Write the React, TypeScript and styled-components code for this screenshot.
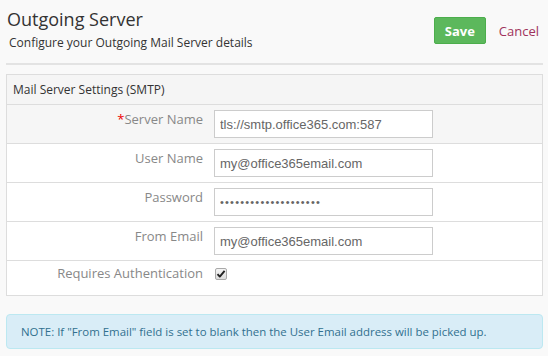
import styled, { createGlobalStyle } from "styled-components";

const GlobalStyle = createGlobalStyle`
  html, body {
    margin: 0;
    padding: 0;
    background: #f9f9f9;
  }
  body {
    font-family: "Open Sans", "Liberation Sans", sans-serif;
    color: #333;
  }
`;

const Page = styled.div`
  width: 548px;
  height: 356px;
  padding: 0 5px 0 6px;
  box-sizing: border-box;
  overflow: hidden;
`;

const Header = styled.div`
  display: flex;
  align-items: flex-start;
  justify-content: space-between;
  height: 63px;
  border-bottom: 2px solid #e3e3e3;
`;

const TitleBlock = styled.div`
  padding-top: 6px;
`;

const Title = styled.h1`
  margin: 0 0 0 1px;
  font-size: 18px;
  font-weight: 400;
  line-height: 26px;
  color: #333;
`;

const Subtitle = styled.p`
  margin: 2px 0 0 3px;
  font-size: 12px;
  line-height: 18px;
  color: #333;
`;

const Actions = styled.div`
  display: flex;
  align-items: center;
  gap: 13px;
  padding-top: 17px;
  padding-right: 6px;
`;

const SaveButton = styled.button`
  width: 52px;
  height: 27px;
  padding: 0;
  margin-right: 0;
  background: #5cb85c;
  border: 1px solid #4cae4c;
  border-radius: 2px;
  color: #fff;
  font-family: "Open Sans", sans-serif;
  font-weight: 700;
  font-size: 13px;
  cursor: pointer;
`;

const CancelLink = styled.a`
  color: #a0335c;
  font-size: 13px;
  text-decoration: none;
  margin-right: -2px;
`;

const Panel = styled.section`
  margin-top: 9px;
  border: 1px solid #ddd;
  background: #fff;
`;

const PanelHeading = styled.div`
  height: 29px;
  display: flex;
  align-items: center;
  padding-left: 6px;
  background: #f5f5f5;
  border-bottom: 1px solid #ddd;
  font-size: 12px;
  color: #333;
`;

const Row = styled.div<{ $shaded?: boolean; $last?: boolean }>`
  display: grid;
  grid-template-columns: 196px 1fr;
  column-gap: 11px;
  align-items: center;
  height: ${(p) => (p.$last ? "34px" : "38px")};
  background: ${(p) => (p.$shaded ? "#f6f6f6" : "#fff")};
  border-bottom: ${(p) => (p.$last ? "none" : "1px solid #ddd")};
`;

const Label = styled.label`
  text-align: right;
  font-size: 13px;
  color: #888;
  line-height: 18px;
  margin-top: -10px;
`;

const Required = styled.span`
  color: #e00;
`;

const TextInput = styled.input<{ $secret?: boolean }>`
  width: 219px;
  height: 28px;
  box-sizing: border-box;
  border: 1px solid #ccc;
  background: #fff;
  padding: 0 5px;
  font-family: "Liberation Sans", Arial, sans-serif;
  font-size: ${(p) => (p.$secret ? "11px" : "13px")};
  letter-spacing: ${(p) => (p.$secret ? "1.2px" : "0")};
  color: #666;
  outline: none;
`;

const CheckBox = styled.span`
  display: inline-flex;
  align-items: center;
  justify-content: center;
  width: 12px;
  height: 12px;
  box-sizing: border-box;
  margin: -8px 0 0 1px;
  border: 1px solid #a9a9a9;
  border-radius: 2px;
  background: linear-gradient(#f4f4f4, #dcdcdc);
`;

const Note = styled.div`
  margin-top: 18px;
  height: 35px;
  box-sizing: border-box;
  display: flex;
  align-items: center;
  padding-left: 14px;
  background: #d9edf7;
  border: 1px solid #bce8f1;
  border-radius: 4px;
  font-size: 11.45px;
  color: #31708f;
`;

function Check() {
  return (
    <CheckBox role="checkbox" aria-checked="true">
      <svg width="10" height="10" viewBox="0 0 10 10">
        <path
          d="M1.5 5.2 L3.8 7.6 L8.6 1.8"
          fill="none"
          stroke="#222"
          strokeWidth="1.9"
          strokeLinejoin="round"
        />
      </svg>
    </CheckBox>
  );
}

export default function App() {
  return (
    <Page>
      <GlobalStyle />
      <Header>
        <TitleBlock>
          <Title>Outgoing Server</Title>
          <Subtitle>Configure your Outgoing Mail Server details</Subtitle>
        </TitleBlock>
        <Actions>
          <SaveButton type="button">Save</SaveButton>
          <CancelLink href="#">Cancel</CancelLink>
        </Actions>
      </Header>

      <Panel>
        <PanelHeading>Mail Server Settings (SMTP)</PanelHeading>
        <Row $shaded>
          <Label>
            <Required>*</Required>Server Name
          </Label>
          <TextInput defaultValue="tls://smtp.office365.com:587" />
        </Row>
        <Row>
          <Label>User Name</Label>
          <TextInput defaultValue="my@office365email.com" />
        </Row>
        <Row>
          <Label>Password</Label>
          <TextInput $secret type="password" defaultValue="ssssssssssssssssssss" />
        </Row>
        <Row>
          <Label>From Email</Label>
          <TextInput defaultValue="my@office365email.com" />
        </Row>
        <Row $last>
          <Label>Requires Authentication</Label>
          <Check />
        </Row>
      </Panel>

      <Note>
        NOTE: If "From Email" field is set to blank then the User Email address
        will be picked up.
      </Note>
    </Page>
  );
}
